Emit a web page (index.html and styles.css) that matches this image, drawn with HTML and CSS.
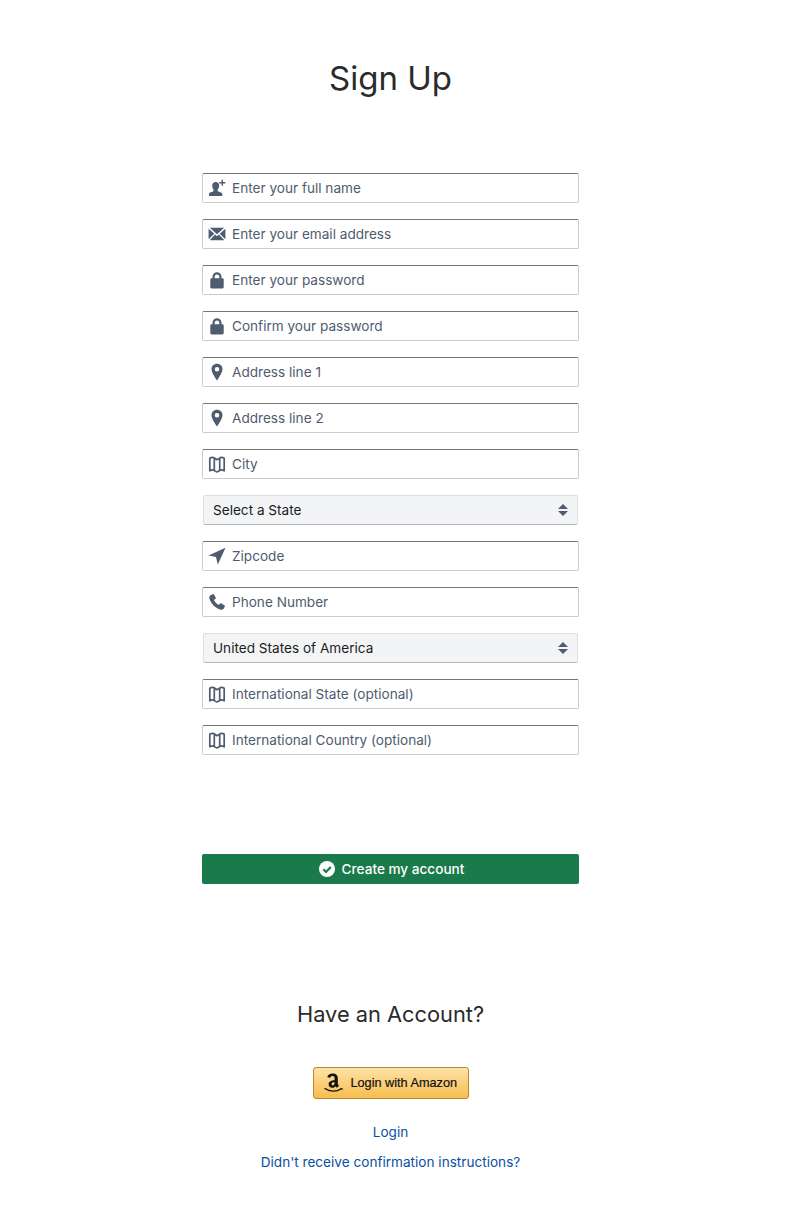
FILE: index.html
```html
<!DOCTYPE html>
<html lang="en">
<head>
<meta charset="UTF-8">
<meta name="viewport" content="width=device-width, initial-scale=1.0">
<title>Sign Up</title>
<link rel="stylesheet" href="styles.css">
</head>
<body>
    <svg class="defs" width="0" height="0">
        <symbol id="i-user" viewBox="0 0 18 18"><path d="M7.800 3c2.100 0 3.400 1.600 3.400 3.700 0 1.500-.7 2.900-1.500 3.700v1.800c1.700.8 3.900 1.100 4.500 2.300V17H1v-2.500c.6-1.200 2.800-1.500 4.500-2.300v-1.800C4.700 9.600 4.200 8.200 4.200 6.700 4.200 4.600 5.600 3 7.800 3z"/><path d="M13.600.8h1.400v2.300h2.300v1.400H15v2.300h-1.400V4.500h-2.300V3.100h2.300z"/></symbol>
        <symbol id="i-mail" viewBox="0 0 18 18"><path d="M1.800 2.800h14.400L9 9.200z"/><path d="M.6 3.700 6.300 8.800.6 14.300zM17.400 3.700 11.700 8.800l5.700 5.500z"/><path d="M7.100 9.600 9 11.200l1.900-1.600 5.500 5.600H1.600z"/></symbol>
        <symbol id="i-lock" viewBox="0 0 18 18"><path fill-rule="evenodd" d="M4.500 7.200V5.800a4.500 4.500 0 0 1 9 0v1.400h.8c.8 0 1.400.6 1.400 1.400v7.400c0 .8-.6 1.400-1.400 1.400H3.700c-.8 0-1.400-.6-1.400-1.400V8.600c0-.8.6-1.400 1.400-1.400zm2.200 0h4.600V5.800a2.300 2.300 0 0 0-4.600 0z"/></symbol>
        <symbol id="i-pin" viewBox="0 0 18 18"><path fill-rule="evenodd" d="M9 .8c3.200 0 5.500 2.300 5.500 5.400 0 2.900-3.200 7.900-5.500 11.200C6.700 14.100 3.500 9.100 3.500 6.200 3.500 3.100 5.800.8 9 .8zm0 3.100a2.300 2.300 0 1 0 0 4.600 2.300 2.300 0 0 0 0-4.600z"/></symbol>
        <symbol id="i-map" viewBox="0 0 18 18"><path fill="none" stroke="currentColor" stroke-width="1.700" stroke-linejoin="round" d="M1.800 3.300c1.700-1.200 3.400-1.200 5 0 .9.700 1.500 1 2.200 1.400.7-.4 1.300-.7 2.200-1.400 1.600-1.200 3.300-1.200 5 0v12.500c-1.700-1.200-3.400-1.200-5 0-.9.700-1.500 1-2.200 1.100-.7-.1-1.300-.4-2.200-1.100-1.600-1.200-3.300-1.200-5 0zM6.300 3v12M11.700 3v12"/></symbol>
        <symbol id="i-arrow" viewBox="0 0 18 18"><path d="M17.500.8 9.800 17.500 8 10 .5 8.500z"/></symbol>
        <symbol id="i-phone" viewBox="0 0 18 18"><path d="M4.700 1.200 2.500 2.300C1.300 3 1 4.500 1.500 6c1.800 5 5.500 8.800 10.500 10.500 1.500.5 3 .1 3.800-1l1-2c.2-.5.100-1-.4-1.300l-3-1.800c-.5-.3-1-.2-1.300.2l-1.200 1.400c-2.200-1-4-2.900-4.900-5l1.500-1.200c.4-.4.500-.9.200-1.300L5.900 1.500c-.3-.5-.8-.5-1.200-.3z"/></symbol>
    </svg>

    <main class="page">
        <h1 class="title">Sign Up</h1>

        <form class="form">
            <div class="field">
                <svg class="field-icon"><use href="#i-user"/></svg>
                <input type="text" placeholder="Enter your full name">
            </div>
            <div class="field">
                <svg class="field-icon"><use href="#i-mail"/></svg>
                <input type="email" placeholder="Enter your email address">
            </div>
            <div class="field">
                <svg class="field-icon"><use href="#i-lock"/></svg>
                <input type="password" placeholder="Enter your password">
            </div>
            <div class="field">
                <svg class="field-icon"><use href="#i-lock"/></svg>
                <input type="password" placeholder="Confirm your password">
            </div>
            <div class="field">
                <svg class="field-icon"><use href="#i-pin"/></svg>
                <input type="text" placeholder="Address line 1">
            </div>
            <div class="field">
                <svg class="field-icon"><use href="#i-pin"/></svg>
                <input type="text" placeholder="Address line 2">
            </div>
            <div class="field">
                <svg class="field-icon"><use href="#i-map"/></svg>
                <input type="text" placeholder="City">
            </div>
            <div class="select-wrap">
                <select>
                    <option>Select a State</option>
                </select>
            </div>
            <div class="field">
                <svg class="field-icon"><use href="#i-arrow"/></svg>
                <input type="text" placeholder="Zipcode">
            </div>
            <div class="field">
                <svg class="field-icon"><use href="#i-phone"/></svg>
                <input type="text" placeholder="Phone Number">
            </div>
            <div class="select-wrap">
                <select>
                    <option>United States of America</option>
                </select>
            </div>
            <div class="field">
                <svg class="field-icon"><use href="#i-map"/></svg>
                <input type="text" placeholder="International State (optional)">
            </div>
            <div class="field">
                <svg class="field-icon"><use href="#i-map"/></svg>
                <input type="text" placeholder="International Country (optional)">
            </div>

            <button type="submit" class="submit">
                <svg class="submit-icon" viewBox="0 0 16 16"><circle cx="8" cy="8" r="8" fill="#fff"/><path d="M4.300 8.300 7 11l4.800-5" fill="none" stroke="#1a7a4c" stroke-width="2.200"/></svg>
                Create my account
            </button>
        </form>

        <h2 class="subtitle">Have an Account?</h2>

        <button type="button" class="amazon">
            <svg class="amazon-logo" viewBox="0 0 20 22">
                <path d="M10.600 8.200c-2.800.2-6 .8-6 4 0 2.200 1.500 3.500 3.500 3.500 1.500 0 2.500-.5 3.400-1.500.5.700.7 1 1.300 1.500l2.300-1.900c-.8-.7-1.300-1.300-1.300-2.500V5.800C13.800 3.500 12 1.500 8.800 1.500c-2.800 0-5 1.200-5.500 3.800l3 .4c.2-1 1-1.600 2.200-1.600 1.500 0 2.100.8 2.100 2.100zm0 2.800c0 1.500-.8 2.500-1.800 2.500-.8 0-1.300-.6-1.300-1.400 0-1.600 1.500-1.900 3.100-1.900z"/>
                <path d="M1 16.500c4.500 3.400 11.500 3.500 16 .5" fill="none" stroke="#111" stroke-width="1.300" stroke-linecap="round"/>
                <path d="M15.500 16h3v2.800l-.9-1.700z"/>
            </svg>
            Login with Amazon
        </button>

        <a class="link" href="#">Login</a>
        <a class="link" href="#">Didn't receive confirmation instructions?</a>
    </main>
</body>
</html>
```

FILE: styles.css
```css
* {
    box-sizing: border-box;
}

body {
    font-family: Inter, "Liberation Sans", sans-serif;
    background-color: #fff;
    color: #2b2b2b;
    margin: 0;
    padding: 0;
}

.defs {
    display: block;
    height: 0;
}

.page {
    width: 781px;
    display: flex;
    flex-direction: column;
    align-items: center;
}

.title {
    font-size: 33px;
    line-height: 42px;
    font-weight: 400;
    margin: 57px 0 0;
}

.form {
    width: 377px;
    margin-top: 74px;
    display: flex;
    flex-direction: column;
    gap: 16px;
}

.field {
    position: relative;
    height: 30px;
}

.field input {
    display: block;
    width: 100%;
    height: 30px;
    padding: 0 8px 0 29px;
    font: inherit;
    font-size: 13.6px;
    color: #2b2b2b;
    background: #fff;
    border: 1px solid #ccc;
    border-top-color: #777;
    border-radius: 2px;
    outline: none;
}

.field input::placeholder {
    color: #4f5b6e;
    opacity: 1;
}

.field-icon {
    position: absolute;
    left: 6px;
    top: 6px;
    width: 18px;
    height: 18px;
    fill: #4f5b6e;
    color: #4f5b6e;
}

.select-wrap {
    position: relative;
    height: 30px;
    padding: 0 1px;
}

.select-wrap::before,
.select-wrap::after {
    content: "";
    position: absolute;
    right: 11px;
    width: 0;
    height: 0;
    border-left: 5px solid transparent;
    border-right: 5px solid transparent;
    pointer-events: none;
}

.select-wrap::before {
    top: 9px;
    border-bottom: 5.500px solid #4f5b6e;
}

.select-wrap::after {
    top: 16px;
    border-top: 5.500px solid #4f5b6e;
}

.select-wrap select {
    display: block;
    width: 100%;
    height: 30px;
    padding: 0 24px 0 9px;
    font: inherit;
    font-size: 13.6px;
    color: #1c1c1c;
    background: #f3f4f6;
    border: 1px solid #dcdee2;
    border-bottom-color: #b5b7bc;
    border-radius: 2px;
    appearance: none;
    -webkit-appearance: none;
}

.submit {
    display: flex;
    align-items: center;
    justify-content: center;
    gap: 7px;
    height: 30px;
    margin-top: 83px;
    padding: 0 0 0 2px;
    font: inherit;
    font-size: 13.6px;
    font-weight: 500;
    color: #fff;
    background-color: #1a7a4c;
    border: none;
    border-radius: 2px;
}

.submit-icon {
    width: 16px;
    height: 16px;
}

.subtitle {
    font-size: 21.8px;
    line-height: 30px;
    font-weight: 400;
    margin: 115px 0 0;
}

.amazon {
    display: flex;
    align-items: center;
    gap: 7px;
    width: 156px;
    height: 32px;
    margin-top: 38px;
    padding: 0 0 0 10px;
    font-family: "Liberation Sans", Arial, sans-serif;
    font-size: 12.7px;
    -webkit-text-stroke: 0.2px #111;
    color: #111;
    background: linear-gradient(#fee3a6, #f6bd50);
    border: 1px solid #b78a2e;
    border-radius: 3px;
}

.amazon-logo {
    width: 20px;
    height: 22px;
    fill: #111;
}

.link {
    display: block;
    font-size: 13.6px;
    line-height: 20px;
    color: #0b4ea2;
    text-decoration: none;
    margin-top: 10px;
}

.amazon + .link {
    margin-top: 23px;
}
```
